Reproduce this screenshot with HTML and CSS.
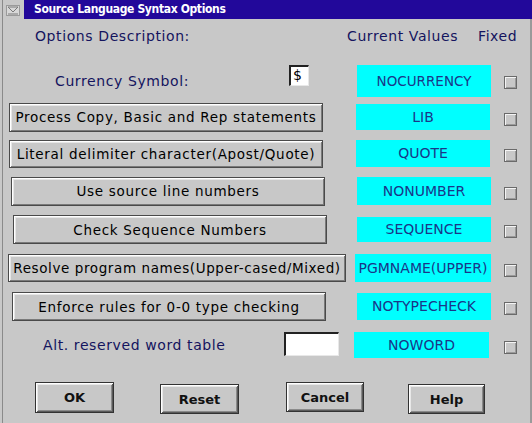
FILE: index.html
```html
<!DOCTYPE html>
<html>
<head>
<meta charset="utf-8">
<link rel="stylesheet" href="styles.css">
</head>
<body>
<div class="window">
  <div class="titlerow">
    <div class="sysmenu">
      <svg width="14" height="11" viewBox="0 0 14 11"><rect x="0.5" y="0.5" width="13" height="10" fill="#d8d8d8" stroke="#9a9a9a"/><path d="M2 2 L12 2 L7 7 Z" fill="none" stroke="#7a7a7a" stroke-width="1"/><path d="M2 9 L12 9" stroke="#7a7a7a"/></svg>
    </div>
    <div class="titlebar">Source Language Syntax Options</div>
  </div>

  <div class="header">
    <span class="label h-desc">Options Description:</span>
    <span class="label h-cur">Current Values</span>
    <span class="label h-fix">Fixed</span>
  </div>

  <div class="rows">
    <div class="row r1">
      <div class="left">
        <span class="label l-cur">Currency Symbol:</span>
        <span class="entry small">$</span>
      </div>
      <div class="value v1">NOCURRENCY</div>
      <span class="check"></span>
    </div>
    <div class="row r2">
      <div class="left"><button class="opt b2">Process Copy, Basic and Rep statements</button></div>
      <div class="value v2">LIB</div>
      <span class="check"></span>
    </div>
    <div class="row r3">
      <div class="left"><button class="opt b3">Literal delimiter character(Apost/Quote)</button></div>
      <div class="value v3">QUOTE</div>
      <span class="check"></span>
    </div>
    <div class="row r4">
      <div class="left"><button class="opt b4">Use source line numbers</button></div>
      <div class="value v4">NONUMBER</div>
      <span class="check"></span>
    </div>
    <div class="row r5">
      <div class="left"><button class="opt b5">Check Sequence Numbers</button></div>
      <div class="value v5">SEQUENCE</div>
      <span class="check"></span>
    </div>
    <div class="row r6">
      <div class="left"><button class="opt b6">Resolve program names(Upper-cased/Mixed)</button></div>
      <div class="value v6">PGMNAME(UPPER)</div>
      <span class="check"></span>
    </div>
    <div class="row r7">
      <div class="left"><button class="opt b7">Enforce rules for 0-0 type checking</button></div>
      <div class="value v7">NOTYPECHECK</div>
      <span class="check"></span>
    </div>
    <div class="row r8">
      <div class="left">
        <span class="label l-alt">Alt. reserved word table</span>
        <span class="entry wide"></span>
      </div>
      <div class="value v8">NOWORD</div>
      <span class="check"></span>
    </div>
  </div>

  <div class="actions">
    <button class="push p-ok">OK</button>
    <button class="push p-reset">Reset</button>
    <button class="push p-cancel">Cancel</button>
    <button class="push p-help">Help</button>
  </div>
</div>
</body>
</html>
```
FILE: styles.css
```css
html, body {
  margin: 0;
  padding: 0;
}
body {
  width: 532px;
  height: 423px;
  background: #c8c8c8;
  font-family: "DejaVu Sans", "Liberation Sans", sans-serif;
  overflow: hidden;
}
.window {
  width: 532px;
  height: 423px;
  box-sizing: border-box;
  border-left: 2px solid #c8c8c8;
  display: flex;
  flex-direction: column;
  box-shadow: inset 1px 0 0 #8a8a8a, inset -2px 0 0 #9a9a9a;
}
.titlerow {
  display: flex;
  height: 19px;
}
.sysmenu {
  width: 22px;
  padding: 5px 0 0 4px;
  box-sizing: border-box;
}
.sysmenu svg { display: block; }
.titlebar {
  flex: 1;
  background: #22089a;
  color: #fff;
  font-family: "DejaVu Sans Condensed", "DejaVu Sans", sans-serif;
  font-weight: bold;
  font-size: 12px;
  line-height: 19px;
  padding-left: 10px;
  letter-spacing: -0.35px;
}
.label {
  color: #14145e;
  font-size: 14px;
  letter-spacing: 0.6px;
  white-space: nowrap;
}
.header {
  display: flex;
  height: 30px;
  align-items: center;
  padding-top: 2px;
}
.h-desc { margin-left: 33px; width: 312px; }
.h-cur { width: 131px; }
.rows {
  display: flex;
  flex-direction: column;
  margin-top: 11px;
}
.row {
  display: grid;
  grid-template-columns: 352px 137px 30px;
  align-items: center;
}
.r1 { height: 37px; }
.r2 { height: 36px; }
.r3 { height: 37px; }
.r4 { height: 38px; }
.r5 { height: 39px; }
.r6 { height: 38px; }
.r7 { height: 39px; }
.r8 { height: 38px; }
.left {
  display: flex;
  align-items: center;
}
.l-cur { margin-left: 53px; width: 234px; }
.l-alt { margin-left: 41px; width: 241px; }
.entry {
  display: block;
  background: #fff;
  box-sizing: border-box;
  border-top: 2px solid #222;
  border-left: 2px solid #222;
  border-right: 1px solid #e8e8e8;
  border-bottom: 1px solid #e8e8e8;
  font-size: 14px;
  line-height: 16px;
  color: #000;
  padding-left: 2px;
}
.entry.small { width: 20px; height: 21px; margin-top: -10px; }
.entry.wide { width: 55px; height: 24px; margin-top: -3px; }
.opt {
  display: block;
  height: 29px;
  width: 314px;
  background: #c8c8c8;
  border: 1px solid #4a4a4a;
  box-shadow: inset 1px 1px 0 #ffffff, inset -1px -1px 0 #7a7a7a, inset 2px 2px 0 #e6e6e6;
  font-family: "DejaVu Sans", sans-serif;
  font-size: 13.5px;
  color: #000;
  padding: 0;
  letter-spacing: 0.7px;
  white-space: nowrap;
}
.b2 { margin-left: 7px; }
.b3 { margin-left: 7px; height: 28px; }
.b4 { margin-left: 9px; height: 29px; }
.b5 { margin-left: 11px; }
.b6 { margin-left: 6px; width: 338px; height: 28px; letter-spacing: 0.6px; }
.b7 { margin-left: 10px; }
.value {
  background: #00ffff;
  color: #1a3688;
  font-size: 14px;
  text-align: center;
  letter-spacing: 0;
  height: 27px;
  line-height: 27px;
  white-space: nowrap;
  margin-left: 2px;
}
.v1 { height: 32px; line-height: 32px; margin-left: 3px; font-size: 13.5px; }
.v2 { margin-left: 2px; width: 134px; height: 26px; line-height: 26px; }
.v3 { width: 134px; }
.v4 { height: 28px; line-height: 28px; margin-left: 3px; }
.v5 { height: 25px; line-height: 25px; margin-left: 3px; width: 134px; }
.v6 { height: 28px; line-height: 28px; margin-left: 1px; }
.v7 { height: 27px; margin-left: 3px; width: 134px; }
.v8 { height: 26px; line-height: 26px; margin-left: 0; width: 135px; }
.check {
  display: block;
  width: 13px;
  height: 13px;
  box-sizing: border-box;
  margin-left: 13px;
  margin-top: 4px;
  background: #c8c8c8;
  border: 1px solid #6a6a6a;
  box-shadow: inset 1px 1px 0 #f4f4f4, inset -1px -1px 0 #9a9a9a;
}
.actions {
  display: flex;
  align-items: flex-start;
  margin-top: 18px;
}
.push {
  height: 31px;
  width: 79px;
  background: #c8c8c8;
  border: 1px solid #333;
  box-shadow: inset 1px 1px 0 #ffffff, inset -1px -1px 0 #5a5a5a, inset 2px 2px 0 #e8e8e8, inset -2px -2px 0 #8a8a8a;
  font-family: "DejaVu Sans", sans-serif;
  font-weight: bold;
  font-size: 13px;
  color: #111;
  padding: 0;
}
.p-ok { margin-left: 33px; }
.p-reset { margin-left: 46px; margin-top: 2px; height: 30px; }
.p-cancel { margin-left: 47px; width: 78px; height: 30px; }
.p-help { margin-left: 44px; width: 77px; margin-top: 2px; height: 30px; }
```
